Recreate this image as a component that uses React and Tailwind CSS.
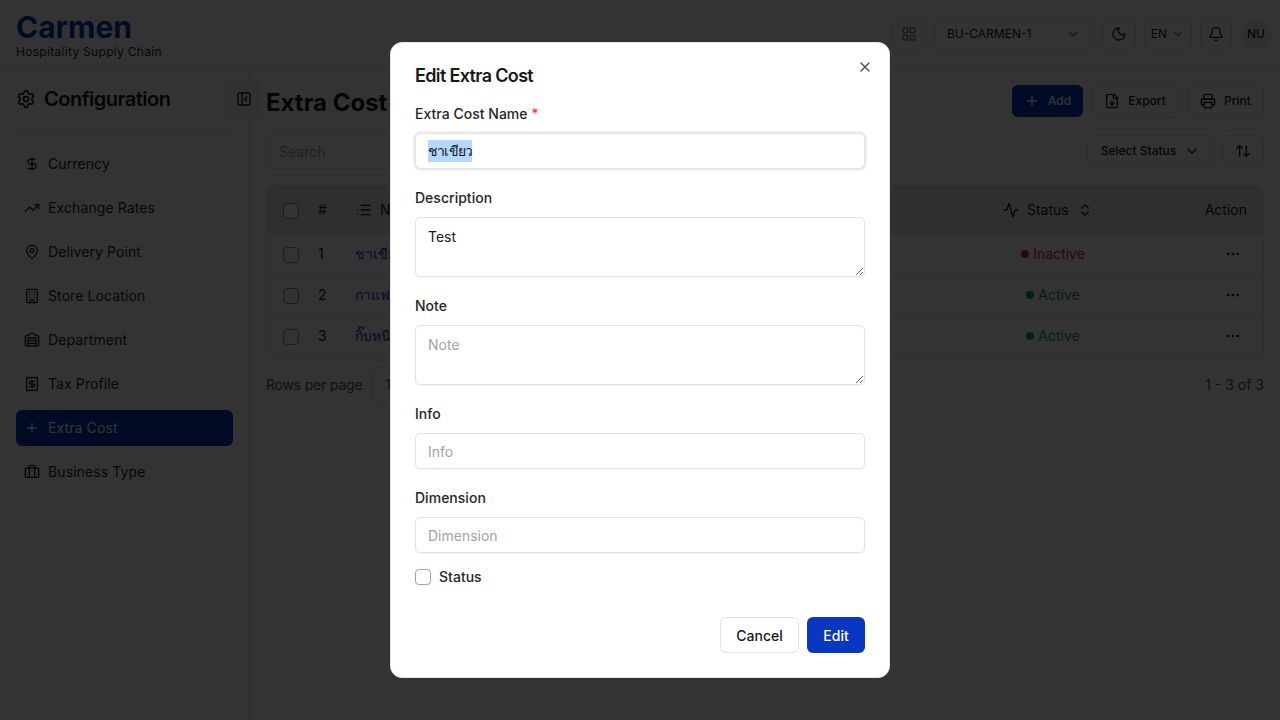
import { useEffect, useRef } from "react";
import {
  Activity,
  ArrowUpDown,
  Bell,
  Briefcase,
  Building,
  ChevronDown,
  ChevronsUpDown,
  DollarSign,
  Ellipsis,
  FileDown,
  LayoutGrid,
  List,
  MapPin,
  Moon,
  PanelLeftClose,
  Plus,
  Printer,
  Receipt,
  Settings,
  TrendingUp,
  Warehouse,
  X,
} from "lucide-react";

const navItems = [
  { label: "Currency", icon: DollarSign },
  { label: "Exchange Rates", icon: TrendingUp },
  { label: "Delivery Point", icon: MapPin },
  { label: "Store Location", icon: Building },
  { label: "Department", icon: Warehouse },
  { label: "Tax Profile", icon: Receipt },
  { label: "Extra Cost", icon: Plus, active: true },
  { label: "Business Type", icon: Briefcase },
];

const rows = [
  { id: 1, name: "ชาเขียว", active: false },
  { id: 2, name: "กาแฟ", active: true },
  { id: 3, name: "กิ๊บหนีบ", active: true },
];

const fieldBase =
  "w-full h-9 px-3 rounded-md border border-[#e2e2e2] bg-white text-sm text-[#18181b] outline-none placeholder:text-[#a3a3a3]";
const inputClass = `${fieldBase} shadow-xs`;
const areaClass =
  "block w-full h-[60px] px-3 pt-[9px] pb-2 rounded-md border border-[#e2e2e2] bg-white text-sm text-[#18181b] outline-none shadow-xs placeholder:text-[#a3a3a3]";
const labelClass = "text-sm leading-[14px] font-[450] tracking-[0.02px] text-[#262626]";

export default function App() {
  const nameRef = useRef(null);

  useEffect(() => {
    nameRef.current?.select();
  }, []);

  return (
    <div className="relative h-[720px] w-[1280px] overflow-hidden bg-white font-['Inter','Noto_Sans',sans-serif] text-[#18181b]">
      {/* Header */}
      <header className="flex h-[69px] items-center justify-between border-b border-[#e5e5e5] pl-4 pr-2">
        <div className="pt-1">
          <div className="text-[30px] leading-[30px] font-bold text-[#0a37bf]">Carmen</div>
          <div className="mt-[2px] text-xs leading-4 tracking-[0.3px] text-[#262626]">Hospitality Supply Chain</div>
        </div>
        <div className="flex items-center gap-2">
          <button className="flex h-8 w-[34px] items-center justify-center rounded-md border border-[#e5e5e5]">
            <LayoutGrid className="h-4 w-4 text-[#737373]" />
          </button>
          <button className="flex h-8 w-40 items-center justify-between rounded-md border border-[#e5e5e5] pl-3 pr-3 text-xs">
            BU-CARMEN-1
            <ChevronDown className="h-4 w-4 text-[#737373]" />
          </button>
          <button className="flex h-8 w-[34px] items-center justify-center rounded-md border border-[#e5e5e5]">
            <Moon className="h-4 w-4" />
          </button>
          <button className="flex h-8 w-12 items-center justify-center gap-1 rounded-md border border-[#e5e5e5] text-xs">
            EN
            <ChevronDown className="h-3.5 w-3.5 text-[#737373]" />
          </button>
          <button className="flex h-8 w-8 items-center justify-center rounded-md border border-[#e5e5e5]">
            <Bell className="h-4 w-4" />
          </button>
          <div className="flex h-8 w-8 items-center justify-center rounded-full bg-[#f0f0f0] text-xs font-medium">NU</div>
        </div>
      </header>

      <div className="flex h-[651px]">
        {/* Sidebar */}
        <aside className="relative w-[250px] shrink-0 border-r border-[#e5e5e5] px-4">
          <div className="flex h-[61px] items-center gap-2 border-b border-[#e5e5e5]">
            <Settings className="h-5 w-5" />
            <h2 className="text-xl font-semibold tracking-tight">Configuration</h2>
          </div>
          <nav className="mt-4 flex flex-col gap-2">
            {navItems.map((item) => (
              <div
                key={item.label}
                className={`flex h-9 items-center gap-2 rounded-md px-2 text-sm tracking-[0.1px] ${
                  item.active ? "bg-[#0a37bf] text-white" : "text-[#262626]"
                }`}
              >
                <item.icon className="h-4 w-4" />
                {item.label}
              </div>
            ))}
          </nav>
          <button className="absolute -right-[11px] top-3 flex h-9 w-[34px] items-center justify-center rounded-md border border-[#e5e5e5] bg-[#f5f5f5] pl-[1px]">
            <PanelLeftClose className="h-4 w-4" />
          </button>
        </aside>

        {/* Main */}
        <main className="flex-1 px-4 pt-4">
          <div className="flex h-8 items-center justify-between">
            <h1 className="pt-1 text-2xl font-bold">Extra Cost</h1>
            <div className="flex items-center gap-2">
              <button className="flex h-8 w-[71px] items-center justify-center gap-2 rounded-md bg-[#0a37bf] text-xs font-medium text-white">
                <Plus className="h-4 w-4" />
                Add
              </button>
              <button className="flex h-8 w-[88px] items-center justify-center gap-2 rounded-md border border-[#e5e5e5] text-xs font-medium">
                <FileDown className="h-4 w-4" />
                Export
              </button>
              <button className="flex h-8 w-[77px] items-center justify-center gap-2 rounded-md border border-[#e5e5e5] text-xs font-medium">
                <Printer className="h-4 w-4" />
                Print
              </button>
            </div>
          </div>

          <div className="mt-[17px] flex items-start justify-between">
            <div className="flex h-[35px] w-[300px] items-center rounded-md border border-[#e5e5e5] px-3 text-sm text-[#a3a3a3]">Search</div>
            <div className="mt-[1px] flex items-center gap-2">
              <button className="flex h-8 w-[127px] items-center justify-center gap-2 rounded-md border border-[#e5e5e5] text-xs font-medium">
                Select Status
                <ChevronDown className="h-4 w-4" />
              </button>
              <button className="flex h-8 w-[42px] items-center justify-center rounded-md border border-[#e5e5e5]">
                <ArrowUpDown className="h-4 w-4" />
              </button>
            </div>
          </div>

          <div className="mt-4 overflow-hidden rounded-lg border border-[#e5e5e5]">
            <div className="flex h-[47px] items-center bg-[#ececec] text-sm">
              <span className="ml-4 mt-[2px] h-4 w-4 rounded border border-[#8a8a8a] bg-white" />
              <span className="ml-[19px] w-[38px]">#</span>
              <List className="h-4 w-4" />
              <span className="ml-2">Name</span>
              <Activity className="ml-auto h-4 w-4" />
              <span className="ml-2">Status</span>
              <ChevronsUpDown className="ml-2 h-4 w-4" />
              <span className="ml-[112px] mr-4">Action</span>
            </div>
            {rows.map((row) => (
              <div key={row.id} className="flex h-[41px] items-center border-t border-[#e5e5e5] text-sm">
                <span className="ml-4 mt-[2px] h-4 w-4 rounded border border-[#8a8a8a] bg-white" />
                <span className="ml-[19px] w-[37px]">{row.id}</span>
                <span className="text-[#0a37bf]">{row.name}</span>
                <span
                  className={`ml-auto flex w-[80px] items-center justify-center gap-1 ${
                    row.active ? "text-[#16a34a]" : "text-[#dc2626]"
                  }`}
                >
                  <span className={`h-2 w-2 rounded-full ${row.active ? "bg-[#16a34a]" : "bg-[#dc2626]"}`} />
                  {row.active ? "Active" : "Inactive"}
                </span>
                <span className="ml-[132px] mr-[22px] flex w-4 justify-center">
                  <Ellipsis className="h-4 w-4" />
                </span>
              </div>
            ))}
          </div>

          <div className="mt-[10px] flex items-center justify-between text-sm text-[#525252]">
            <div className="flex items-center gap-[10px] tracking-[-0.2px]">
              Rows per page
              <div className="flex h-9 w-[70px] items-center rounded-md border border-[#e5e5e5] px-3">10</div>
            </div>
            <span>1 - 3 of 3</span>
          </div>
        </main>
      </div>

      {/* Dialog overlay */}
      <div className="absolute inset-0 flex items-center justify-center bg-black/80">
        <div className="relative flex h-[636px] w-[500px] flex-col rounded-xl border border-[#e5e5e5] bg-white p-6">
          <button className="absolute right-4 top-4 text-[#525252]">
            <X className="h-4 w-4" />
          </button>
          <h2 className="text-lg leading-[18px] font-semibold tracking-[-0.65px]">Edit Extra Cost</h2>

          <div className="mt-[22px] flex flex-col gap-[22px]">
            <div className="flex flex-col gap-3">
              <label className={labelClass}>
                Extra Cost Name <span className="text-[#ef4444]">*</span>
              </label>
              <input
                ref={nameRef}
                defaultValue="ชาเขียว"
                className={`${fieldBase} tracking-[-0.8px] selection:bg-[#b3d7ff] shadow-[0_0_0_2px_#efefef]`}
              />
            </div>
            <div className="flex flex-col gap-3">
              <label className={labelClass}>Description</label>
              <textarea defaultValue="Test" className={areaClass} />
            </div>
            <div className="flex flex-col gap-3">
              <label className={labelClass}>Note</label>
              <textarea placeholder="Note" className={areaClass} />
            </div>
            <div className="flex flex-col gap-3">
              <label className={labelClass}>Info</label>
              <input placeholder="Info" className={inputClass} />
            </div>
            <div className="flex flex-col gap-3">
              <label className={labelClass}>Dimension</label>
              <input placeholder="Dimension" className={inputClass} />
            </div>
          </div>

          <div className="mt-4 flex items-center gap-2">
            <span className="h-4 w-4 rounded border border-[#9ca3bd] bg-white shadow-xs" />
            <span className={labelClass}>Status</span>
          </div>

          <div className="mt-8 flex justify-end gap-2">
            <button className="h-9 w-[79px] rounded-md border border-[#e2e2e2] bg-white pt-[2px] text-sm font-[450]">Cancel</button>
            <button className="h-9 w-[58px] rounded-md bg-[#0a37bf] pt-[2px] text-sm font-[450] text-white">Edit</button>
          </div>
        </div>
      </div>
    </div>
  );
}
